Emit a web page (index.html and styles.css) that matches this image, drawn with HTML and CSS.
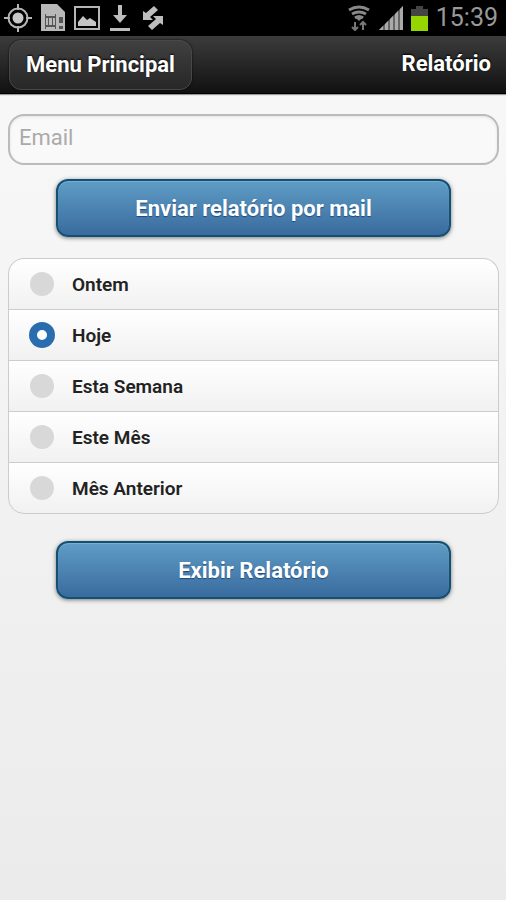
FILE: index.html
```html
<!DOCTYPE html>
<html lang="pt">
<head>
    <meta charset="UTF-8">
    <meta name="viewport" content="width=device-width, initial-scale=1.0">
    <title>Relatório</title>
    <link rel="stylesheet" href="styles.css">
</head>
<body>
    <div class="statusbar">
        <div class="notifications">
            <svg width="28" height="28" viewBox="0 0 28 28" fill="none" stroke="#b5b5b5" stroke-width="2">
                <circle cx="14" cy="14" r="9.5"/>
                <circle cx="14" cy="14" r="5.5" fill="#c8c8c8" stroke="none"/>
                <path d="M14 0v6M14 22v6M0 14h6M22 14h6"/>
            </svg>
            <svg width="24" height="28" viewBox="0 0 24 28">
                <path d="M0 0h16l8 8v19H0z" fill="#b8b8b8"/>
                <path d="M4 10h1v15H4zM14 10h1v15h-1zM4 12h10v2H4zM4 21h10v2H4zM18 13h4v6h-4zM18 22h4v3h-4z" fill="#555"/>
                <path d="M7 14h1v7H7zM11 14h1v7h-1z" fill="#555"/>
            </svg>
            <svg width="26" height="26" viewBox="0 0 26 26">
                <path d="M1 2h24v22H1z" fill="none" stroke="#b5b5b5" stroke-width="2"/>
                <path d="M4 21v-4l5-6 4 4 3-2 6 4v4z" fill="#c4c4c4"/>
            </svg>
            <svg width="24" height="28" viewBox="-1 0 24 28" fill="#bdbdbd">
                <path d="M8 1h4v10h5l-7 8-7-8h5zM0 24h20v3H0z"/>
            </svg>
            <svg width="22" height="28" viewBox="0 0 22 28" fill="#bdbdbd">
                <path d="M1 7l3 2 8-7 4 4-8 7 3 3H1zM21 12v9l-3-2-8 7-4-4 8-7-3-3z"/>
            </svg>
        </div>
        <div class="system">
            <svg width="24" height="26" viewBox="0 0 24 26" fill="none" stroke="#888" stroke-width="3">
                <path d="M2 5q10-6 20 0M5 9q7-4 14 0M8 13q4-3 8 0"/>
                <path d="M9 13h6l-3 3z" fill="#888" stroke="none"/>
                <path d="M8 17v8M5 22l3 3 3-3M16 25v-8M13 20l3-3 3 3" stroke="#777" stroke-width="2"/>
            </svg>
            <svg width="24" height="24" viewBox="0 0 24 24">
                <path d="M0 24 24 0v24z" fill="#666"/>
                <path d="M0 24l4-4v4zM6 24v-6l3-3v9zM11 24V13l3-3v14zM16 24V8l3-3v19zM21 24V3l3-3v24z" fill="#aaa"/>
            </svg>
            <svg width="17" height="25" viewBox="0 0 17 25">
                <path d="M5 0h7v3h5v7H0V3h5z" fill="#444"/>
                <path d="M0 10h17v15H0z" fill="#95d600"/>
            </svg>
            <span class="clock">15:39</span>
        </div>
    </div>

    <header class="header">
        <a href="#" class="menu-button">Menu Principal</a>
        <h1>Relatório</h1>
    </header>

    <form class="content">
        <input type="email" class="email" placeholder="Email" aria-label="Email">
        <button type="button" class="button">Enviar relatório por mail</button>

        <ul class="periods">
            <li><label><input type="radio" name="periodo">Ontem</label></li>
            <li><label><input type="radio" name="periodo" checked>Hoje</label></li>
            <li><label><input type="radio" name="periodo">Esta Semana</label></li>
            <li><label><input type="radio" name="periodo">Este Mês</label></li>
            <li><label><input type="radio" name="periodo">Mês Anterior</label></li>
        </ul>

        <button type="button" class="button">Exibir Relatório</button>
    </form>
</body>
</html>
```
FILE: styles.css
```css
* {
    box-sizing: border-box;
}
body {
    margin: 0;
    min-height: 100vh;
    font-family: Roboto, "Liberation Sans", sans-serif;
    background: linear-gradient(#f9f9f9, #ebebeb);
}

/* Android status bar */
.statusbar {
    display: flex;
    justify-content: space-between;
    align-items: center;
    height: 36px;
    padding: 0 8px 0 4px;
    background: #000;
}
.notifications, .system {
    display: flex;
    align-items: center;
}
.notifications {
    gap: 9px;
}
.system {
    gap: 8px;
}
.clock {
    font-size: 25px;
    line-height: 36px;
    color: #999;
}

/* Header */
.header {
    display: flex;
    justify-content: space-between;
    align-items: center;
    height: 58px;
    padding: 0 15px 0 9px;
    border-bottom: 1px solid #000;
    background: linear-gradient(#3c3c3c, #111);
    box-shadow: 0 1px 1px #999;
    color: #fff;
    text-shadow: 0 -1px 2px #000;
}
.header h1 {
    margin: 0;
    font-size: 22px;
    line-height: 30px;
    font-weight: 700;
    padding-bottom: 2px;
}
.menu-button {
    height: 50px;
    padding: 0 16px;
    border: 1px solid #484848;
    border-radius: 12px;
    background: linear-gradient(#404040, #272727);
    box-shadow: 0 0 2px #000;
    font-size: 22px;
    line-height: 48px;
    font-weight: 700;
    color: #fff;
    text-decoration: none;
}

/* Form */
.content {
    display: flex;
    flex-direction: column;
    padding: 20px 7px 20px 8px;
}
.email {
    width: 100%;
    height: 51px;
    padding: 0 9px 4px;
    border: 2px solid #bbb;
    border-radius: 16px;
    background: #f9f9f9;
    box-shadow: inset 0 1px 3px #e4e4e4;
    font: 22px Roboto, "Liberation Sans", sans-serif;
    color: #333;
}
.email::placeholder {
    color: #aaa;
}
.button {
    height: 58px;
    margin: 14px 48px 0;
    border: 2px solid #145072;
    border-radius: 12px;
    background: linear-gradient(#5f9cc5, #396b9e);
    box-shadow: inset 0 1px 1px #78b1d5, 0 1px 4px #777;
    font: 700 22px Roboto, "Liberation Sans", sans-serif;
    color: #fff;
    text-shadow: 0 1px 1px #194b7e;
}
.periods {
    margin: 21px 0 13px;
    padding: 0;
    list-style: none;
}
.periods li {
    border: 1px solid #ccc;
    border-bottom: 0;
    background: linear-gradient(#fff, #f1f1f1);
}
.periods li:first-child {
    border-radius: 16px 16px 0 0;
}
.periods li:last-child {
    border-bottom: 1px solid #ccc;
    border-radius: 0 0 16px 16px;
}
.periods label {
    display: flex;
    align-items: center;
    gap: 18px;
    height: 50px;
    padding-left: 21px;
    font-size: 19px;
    font-weight: 600;
    color: #222;
}
.periods input {
    appearance: none;
    width: 24px;
    height: 24px;
    margin: 0;
    border-radius: 50%;
    background: #d8d8d8;
}
.periods input:checked {
    border: 7px solid #2a6dae;
    background: #fff;
    box-shadow: 0 0 0 1px #2a6dae;
}
```
